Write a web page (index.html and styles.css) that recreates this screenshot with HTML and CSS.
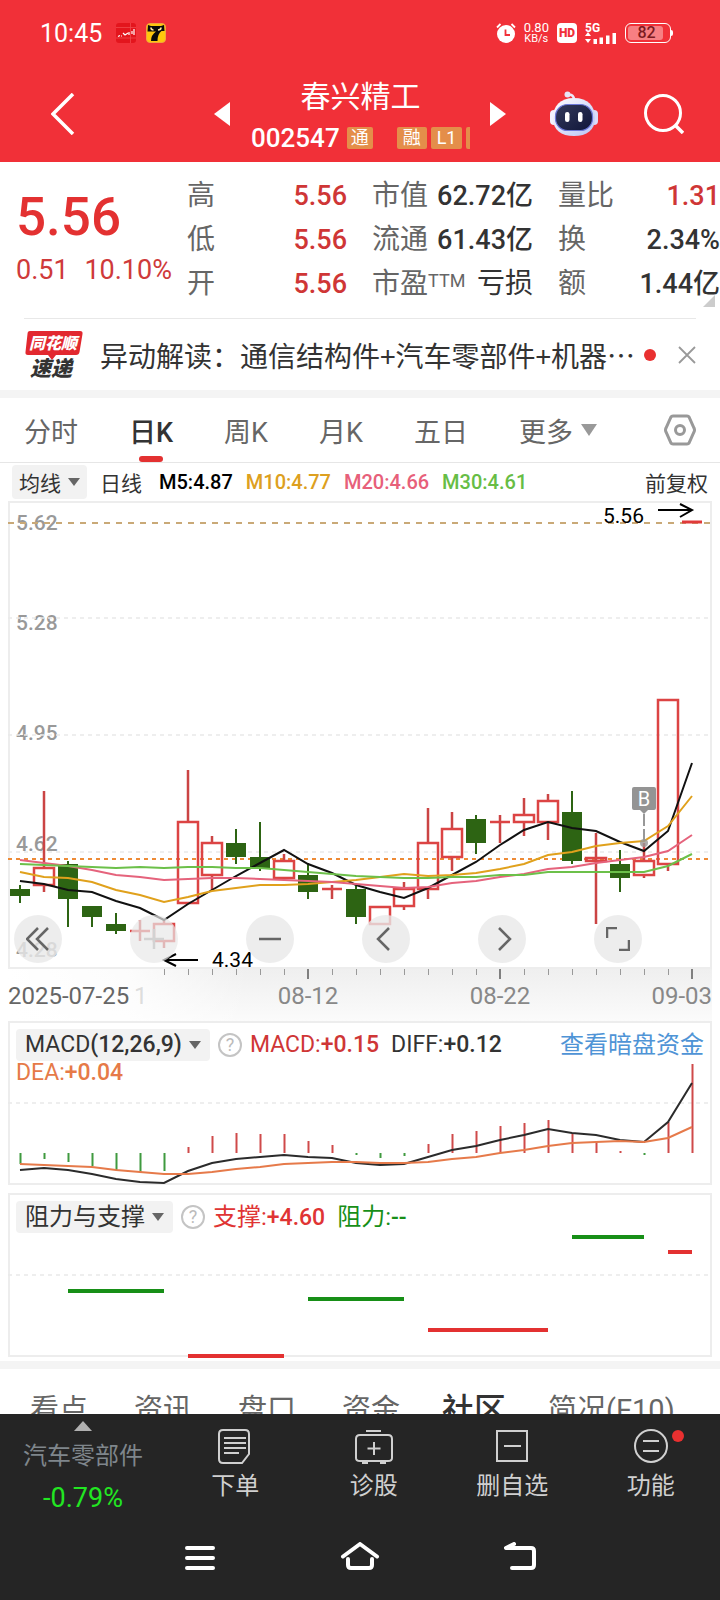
FILE: index.html
```html
<!DOCTYPE html>
<html lang="zh-CN">
<head>
<meta charset="utf-8">
<meta name="viewport" content="width=device-width, initial-scale=1">
<title>春兴精工 002547</title>
<link rel="stylesheet" href="styles.css">
</head>
<body>
<div class="app">
  <header class="header">
    <div class="status">
      <span class="clock">10:45</span>
      <svg class="status-app" viewBox="0 0 20 20" width="20" height="20" aria-hidden="true">
        <rect width="20" height="20" rx="3" fill="#e3151d"/>
        <path d="M0 4.500h20M0 15h20M14.500 0v20" stroke="#f0474b" stroke-width=".8"/>
        <path d="M2 13.500l2-1M5 13h1M7 10l2 2M9 12l3-2M13 9v3M16 8v3M18 6v6" stroke="#fff" stroke-width="1.200" fill="none"/>
      </svg>
      <svg class="status-app" viewBox="0 0 20 20" width="20" height="20" aria-hidden="true">
        <rect x=".5" y=".5" width="19" height="19" rx="3.500" fill="#ffc70d" stroke="#f2a43c"/>
        <path d="M2 2l3 1h10l3-1 .5 6h-3q-4 3-4 10H5q0-6 5-9.500H1.500z" fill="#0b0b0b"/>
        <path d="M5 4.500q0 2.500 2.500 2.500M15 4.500q0 2.500-3 2.500" stroke="#ffe9a0" stroke-width="1.600" fill="none"/>
      </svg>
      <div class="status-right">
        <svg viewBox="0 0 20 20" width="20" height="20" aria-hidden="true">
          <circle cx="10" cy="11" r="9" fill="#fff"/>
          <path d="M1 4.500L4.500 1M19 4.500L15.500 1" stroke="#fff" stroke-width="1.800"/>
          <path d="M9.500 6.500V12H14" stroke="#f13038" stroke-width="1.800" fill="none"/>
        </svg>
        <span class="speed"><span>0.80</span><span>KB/s</span></span>
        <span class="hd">HD</span>
        <span class="signal">
          <span class="net">5G</span>
          <svg viewBox="0 0 32 12" width="32" height="12" aria-hidden="true">
            <path d="M0 4L3 0l3 4zM0 7h6l-3 4zM8.500 7h3.500v5H8.500zM14.500 5.500H18V12h-3.500zM21 3.500h3.500V12H21zM27.500 1H31v11h-3.500z" fill="#fff"/>
          </svg>
        </span>
        <span class="battery"><span class="battery-level">82</span></span>
      </div>
    </div>
    <div class="nav">
      <button class="icon-btn back" aria-label="返回">
        <svg viewBox="0 0 24 42" width="24" height="42"><path d="M22 1L2 21l20 20" fill="none" stroke="#fff" stroke-width="3.500"/></svg>
      </button>
      <button class="icon-btn" aria-label="上一只">
        <svg viewBox="0 0 16 24" width="16" height="24"><path d="M16 0v24L0 12z" fill="#fff"/></svg>
      </button>
      <div class="stock">
        <h1 class="stock-name">春兴精工</h1>
        <div class="stock-code">
          <span>002547</span>
          <span class="badge badge-first">通</span>
          <span class="badge">融</span>
          <span class="badge">L1</span>
          <span class="badge badge-cut"></span>
        </div>
      </div>
      <button class="icon-btn" aria-label="下一只">
        <svg viewBox="0 0 16 24" width="16" height="24"><path d="M0 0v24l16-12z" fill="#fff"/></svg>
      </button>
      <button class="icon-btn robot" aria-label="智能助手">
        <svg viewBox="0 0 50 46" width="50" height="46">
          <defs>
            <linearGradient id="shell" x1="0" y1="0" x2="1" y2="1"><stop offset="0" stop-color="#fff"/><stop offset="1" stop-color="#b9c3f5"/></linearGradient>
            <linearGradient id="visor" x1="0" y1="0" x2="1" y2="1"><stop offset="0" stop-color="#33395a"/><stop offset="1" stop-color="#10163a"/></linearGradient>
          </defs>
          <path d="M25 9Q25 3 19 4" fill="none" stroke="#ece9fa" stroke-width="2.500"/>
          <circle cx="18.500" cy="3.500" r="3" fill="#e7e4f7"/>
          <rect x="1" y="19" width="8" height="15" rx="4" fill="#f3f2fd"/>
          <rect x="41" y="19" width="8" height="15" rx="4" fill="#dadcfa"/>
          <path d="M25 7C39 7 46 15 46 27S38 45 25 45 4 39 4 27 11 7 25 7z" fill="url(#shell)"/>
          <rect x="6.500" y="13.500" width="37" height="26" rx="12" fill="url(#visor)" stroke="#6c78d8" stroke-width="1.200"/>
          <rect x="16" y="21" width="4.500" height="10" rx="2.200" fill="#fff"/>
          <rect x="29" y="21" width="4.500" height="10" rx="2.200" fill="#fff"/>
        </svg>
      </button>
      <button class="icon-btn search" aria-label="搜索">
        <svg viewBox="0 0 40 40" width="40" height="40"><circle cx="19" cy="19" r="17.500" fill="none" stroke="#fff" stroke-width="3"/><path d="M31 31l8 8" stroke="#fff" stroke-width="3.500"/></svg>
      </button>
    </div>
  </header>

  <main class="main">
    <section class="quote">
      <div class="price">
        <div class="price-now">5.56</div>
        <div class="price-change"><span>0.51</span><span>10.10%</span></div>
      </div>
      <dl class="stats">
        <div><dt>高</dt><dd class="up">5.56</dd></div>
        <div><dt>低</dt><dd class="up">5.56</dd></div>
        <div><dt>开</dt><dd class="up">5.56</dd></div>
      </dl>
      <dl class="stats">
        <div><dt>市值</dt><dd>62.72亿</dd></div>
        <div><dt>流通</dt><dd>61.43亿</dd></div>
        <div><dt>市盈<small class="ttm">TTM</small></dt><dd class="plain">亏损</dd></div>
      </dl>
      <dl class="stats stats-last">
        <div><dt>量比</dt><dd class="up">1.31</dd></div>
        <div><dt>换</dt><dd>2.34%</dd></div>
        <div><dt>额</dt><dd>1.44亿</dd></div>
      </dl>
      <span class="corner"></span>
    </section>

    <section class="news">
      <svg class="news-logo" viewBox="0 0 60 50" width="60" height="50" role="img" aria-label="同花顺速递">
        <path d="M6 1h50q3 0 2.500 3l-3 18q-.5 3-3.500 3H32l-4 5-4-5H4q-3 0-2.500-3l2-18Q3.500 1 6 1z" fill="#e2282f"/>
        <text class="logo-top" x="5" y="19">同花顺</text>
        <text class="logo-bottom" x="6" y="46">速递</text>
      </svg>
      <a class="news-text" href="#news">异动解读：通信结构件+汽车零部件+机器…</a>
      <span class="dot"></span>
      <button class="icon-btn" aria-label="关闭">
        <svg viewBox="0 0 18 18" width="18" height="18"><path d="M1 1l16 16M17 1L1 17" stroke="#999" stroke-width="1.800"/></svg>
      </button>
    </section>

    <nav class="periods">
      <button class="period">分时</button>
      <button class="period active">日K</button>
      <button class="period">周K</button>
      <button class="period">月K</button>
      <button class="period">五日</button>
      <button class="period more">更多<svg viewBox="0 0 16 12" width="16" height="12" aria-hidden="true"><path d="M0 0h16L8 12z" fill="#999"/></svg></button>
      <button class="icon-btn settings" aria-label="设置">
        <svg viewBox="0 0 32 32" width="32" height="32"><path d="M9 2h14q1.500 0 2 1l5 11q1 2 0 4l-5 11q-.5 1-2 1H9q-1.500 0-2-1L2 18q-1-2 0-4L7 3q.5-1 2-1z" fill="none" stroke="#999" stroke-width="3"/><circle cx="16" cy="16" r="4.500" fill="none" stroke="#999" stroke-width="3"/></svg>
      </button>
    </nav>

    <div class="averages">
      <button class="pick pick-small">均线<span class="caret"></span></button>
      <span class="kind">日线</span>
      <span class="ma5">M5:4.87</span>
      <span class="ma10">M10:4.77</span>
      <span class="ma20">M20:4.66</span>
      <span class="ma30">M30:4.61</span>
      <span class="adjust">前复权</span>
    </div>

    <section class="panel">
      <svg class="plot" viewBox="0 501 720 520" role="img" aria-label="日K线图">
        <defs>
          <linearGradient id="shade" x1="0" y1="0" x2="0" y2="1"><stop offset="0" stop-color="#efefef"/><stop offset="1" stop-color="#fbfbfb"/></linearGradient>
          <linearGradient id="fade"><stop offset="0" stop-color="#fff"/><stop offset=".5" stop-color="#fff" stop-opacity=".8"/><stop offset="1" stop-color="#fff" stop-opacity="0"/></linearGradient>
        </defs>
        <rect x="8" y="969" width="704" height="52" fill="url(#shade)"/>
        <rect x="8" y="969" width="240" height="52" fill="url(#fade)"/>
        <rect class="frame" x="9" y="502" width="702" height="466"/>
        <g class="axis">
          <text x="16" y="530">5.62</text><text x="16" y="630">5.28</text><text x="16" y="740">4.95</text><text x="16" y="851">4.62</text><text x="16" y="957">4.28</text>
        </g>
        <path class="grid" d="M8 618H708M8 735H708M8 852H708"/>
        <path class="limit" d="M8 523H710"/>
        <path class="last" d="M8 859H708"/>
        <path class="green-body" d="M20 889v7M68 864v35M92 906v11M116 924v7M236 843v14M260 857v11M308 875v17M356 889v28M476 819v24M572 812v49M620 864v14"/>
        <path class="green-wick" d="M20 885v18M68 861v66M92 906v21M116 913v21M236 829v35M260 822v49M308 863v36M356 886v38M476 815v39M572 791v73M620 850v42"/>
        <path class="red-wick" d="M44 791v77M44 885v7M140 920v21M164 920v4M164 941v7M188 770v52M212 836v7M212 875v15M284 854v7M284 877v3M332 885v14M404 882v7M404 906v4M428 808v35M428 889v10M452 812v17M452 857v14M500 815v28M524 798v17M524 822v14M548 794v7M548 822v18M596 833v91M644 843v18M644 875v3M668 864v7"/>
        <path class="red-body" d="M34 868h20v17H34zM154 924h20v17h-20zM178 822h20v81h-20zM202 843h20v32h-20zM274 861h20v17h-20zM370 907h20v17h-20zM394 889h20v17h-20zM418 843h20v46h-20zM442 829h20v28h-20zM514 815h20v7h-20zM538 801h20v21h-20zM586 858h20v3h-20zM634 861h20v14h-20zM658 700h20v164h-20zM130 931h20M322 889h20M490 822h20"/>
        <path class="red-line" d="M682 522h20"/>
        <polyline class="line-ma5" points="20,881 44,884 68,890 92,892 116,901 140,908 164,920 188,904 212,890 236,876 260,863 284,850 308,864 332,873 356,885 380,892 404,898 428,888 452,875 476,862 500,845 524,830 548,822 572,828 596,831 620,842 644,851 668,831 692,763"/>
        <polyline class="line-ma10" points="20,872 44,877 68,878 92,882 116,890 140,895 164,902 188,897 212,891 236,888 260,885 284,885 308,884 332,882 356,880 380,877 404,874 428,876 452,875 476,873 500,869 524,864 548,855 572,852 596,846 620,843 644,841 668,826 692,796"/>
        <polyline class="line-ma20" points="20,860 44,863 68,866 92,870 116,875 140,877 164,880 188,879 212,878 236,878 260,879 284,880 308,881 332,882 356,884 380,886 404,888 428,887 452,883 476,881 500,877 524,874 548,869 572,867 596,863 620,860 644,857 668,851 692,835"/>
        <polyline class="line-ma30" points="20,864 44,865 68,866 92,867 116,868 140,867 164,868 188,867 212,867 236,868 260,868 284,870 308,872 332,874 356,876 380,877 404,878 428,878 452,877 476,877 500,875 524,875 548,872 572,872 596,872 620,872 644,872 668,866 692,854"/>
        <path d="M644 814v12M644 829v12" stroke="#777" stroke-width="1.500"/>
        <circle cx="644" cy="843" r="4" fill="#999" opacity=".8"/>
        <path d="M634 787h20q2 0 2 2v19q0 2-2 2h-6l-4 4-4-4h-6q-2 0-2-2v-19q0-2 2-2z" fill="#949494"/>
        <text class="buy" x="644" y="806">B</text>
        <text class="mark" x="603" y="523">5.56</text>
        <path class="arrow" d="M658 510h34M680 504l12 6-12 7"/>
        <text class="mark" x="212" y="967">4.34</text>
        <path class="arrow" d="M198 960h-34M176 954l-12 6 12 6"/>
        <path d="M164.500 969v6M188.500 969v6M212.500 969v6M236.500 969v6M260.500 969v6M284.500 969v6M332.500 969v6M356.500 969v6M380.500 969v6M404.500 969v6M428.500 969v6M452.500 969v6M476.500 969v6M524.500 969v6M548.500 969v6M572.500 969v6M596.500 969v6M620.500 969v6M644.500 969v6M668.500 969v6" stroke="#999"/>
        <path d="M308 969v10M500 969v10M692 969v10" stroke="#808080" stroke-width="2"/>
        <g class="date">
          <text class="date-first" x="8" y="1004">2025-07-25</text>
          <text class="date-faint" x="134" y="1004">1</text>
          <text x="308" y="1004" text-anchor="middle">08-12</text>
          <text x="500" y="1004" text-anchor="middle">08-22</text>
          <text x="712" y="1004" text-anchor="end">09-03</text>
        </g>
      </svg>
      <div class="controls">
        <button class="control" aria-label="最左"><svg viewBox="0 0 24 24" width="24" height="24"><path d="M12 1L1 12l11 11M22 1L11 12l11 11"/></svg></button>
        <button class="control control-cross" aria-label="放大"><svg viewBox="0 0 24 24" width="24" height="24"><path d="M2 12h20M12 2v20"/></svg></button>
        <button class="control" aria-label="缩小"><svg viewBox="0 0 24 24" width="24" height="24"><path d="M1 12h22"/></svg></button>
        <button class="control" aria-label="向左"><svg viewBox="0 0 24 24" width="24" height="24"><path d="M15 1L4 12l11 11"/></svg></button>
        <button class="control" aria-label="向右"><svg viewBox="0 0 24 24" width="24" height="24"><path d="M9 1l11 11L9 23"/></svg></button>
        <button class="control" aria-label="全屏"><svg viewBox="0 0 24 24" width="24" height="24"><path d="M1 11V1h10M23 13v10H13"/></svg></button>
      </div>
    </section>

    <section class="panel">
      <svg class="plot" viewBox="0 1021 720 164" role="img" aria-label="MACD">
        <rect class="frame" x="9" y="1022" width="702" height="162"/>
        <path class="grid" d="M8 1103H708"/>
        <path class="bar-down" d="M20.500 1153v11M44.500 1153v6M68.500 1153v9M92.500 1153v13M116.500 1153v17M140.500 1153v19M164.500 1153v18M356.500 1153v2M380.500 1153v5M404.500 1153v3M644.500 1153v2"/>
        <path class="bar-up" d="M188.500 1153v-6M212.500 1153v-17M236.500 1153v-20M260.500 1153v-19M284.500 1153v-19M308.500 1153v-12M332.500 1153v-8M428.500 1153v-9M452.500 1153v-19M476.500 1153v-22M500.500 1153v-27M524.500 1153v-30M548.500 1153v-33M572.500 1153v-19M596.500 1153v-12M620.500 1153v-2M668.500 1153v-31M692.500 1153v-89"/>
        <polyline class="line-diff" points="20,1170 44,1168 68,1170 92,1174 116,1179 140,1182 164,1183 188,1171 212,1163 236,1159 260,1157 284,1155 308,1157 332,1158 356,1163 380,1165 404,1164 428,1157 452,1150 476,1146 500,1140 524,1135 548,1129 572,1133 596,1135 620,1140 644,1142 668,1122 692,1083"/>
        <polyline class="line-dea" points="20,1164 44,1165 68,1166 92,1167 116,1170 140,1172 164,1174 188,1174 212,1172 236,1169 260,1167 284,1164 308,1163 332,1162 356,1162 380,1163 404,1163 428,1162 452,1159 476,1157 500,1153 524,1150 548,1146 572,1143 596,1142 620,1141 644,1142 668,1138 692,1127"/>
      </svg>
      <div class="legend">
        <div class="legend-row">
          <button class="pick pick-macd">MACD<b>(12,26,9)</b><span class="caret"></span></button>
          <button class="help" aria-label="说明">?</button>
          <span class="macd up">MACD:<b>+0.15</b></span>
          <span class="macd diff">DIFF:<b>+0.12</b></span>
          <a class="fund" href="#fund">查看暗盘资金</a>
        </div>
        <div class="macd dea">DEA:<b>+0.04</b></div>
      </div>
    </section>

    <section class="panel panel-gap">
      <svg class="plot" viewBox="0 1193 720 168" role="img" aria-label="阻力与支撑">
        <rect class="frame" x="9" y="1194" width="702" height="162"/>
        <path class="grid" d="M8 1275H708"/>
        <path d="M68 1291h96M308 1299h96M572 1237h72" stroke="#178f17" stroke-width="4"/>
        <path d="M188 1356h96M428 1330h120M668 1252h24" stroke="#e33131" stroke-width="4"/>
      </svg>
      <div class="legend">
        <div class="legend-row">
          <button class="pick">阻力与支撑<span class="caret"></span></button>
          <button class="help" aria-label="说明">?</button>
          <span class="support">支撑:<b>+4.60</b></span>
          <span class="resist">阻力:<b>--</b></span>
        </div>
      </div>
    </section>

    <nav class="topics">
      <a href="#view">看点</a>
      <a href="#info">资讯</a>
      <a href="#book">盘口</a>
      <a href="#flow">资金</a>
      <a class="topic-active" href="#club">社区</a>
      <a href="#f10">简况(F10)</a>
    </nav>
  </main>

  <footer class="footer">
    <div class="actions">
      <button class="action sector">
        <span class="sector-caret"></span>
        <span class="sector-name">汽车零部件</span>
        <span class="sector-change">-0.79%</span>
      </button>
      <button class="action">
        <svg viewBox="0 0 36 40" width="36" height="40"><path d="M6 2h22q4 0 4 4v20l-7 9H6q-4 0-4-4V6q0-4 4-4z"/><path d="M7 10h22M7 15h22M7 20h22M7 25h15"/></svg>
        <span>下单</span>
      </button>
      <button class="action">
        <svg viewBox="0 0 40 40" width="40" height="40"><path d="M12 3h15M6 7h28q4 0 4 4v19q0 3-4 3H6q-4 0-4-3V11q0-4 4-4zM8 35h6M26 35h6M20 14v13M13.500 20.500h13"/></svg>
        <span>诊股</span>
      </button>
      <button class="action">
        <svg viewBox="0 0 36 40" width="36" height="40"><path d="M3 3h30v30H3zM10 18h17"/></svg>
        <span>删自选</span>
      </button>
      <button class="action">
        <svg viewBox="0 0 36 40" width="36" height="40"><circle cx="18" cy="18" r="16"/><path d="M10 13h16M10 23h16"/></svg>
        <span>功能</span>
        <span class="dot action-dot"></span>
      </button>
    </div>
    <div class="system">
      <button class="icon-btn" aria-label="最近任务"><svg viewBox="0 0 32 32" width="32" height="32"><path d="M3 6h26M3 16h26M3 26h26"/></svg></button>
      <button class="icon-btn" aria-label="主屏幕"><svg viewBox="0 0 40 32" width="40" height="32"><path d="M3 14.500L20 2l17 12.500M8 17v6q0 3 3 3h18q3 0 3-3v-6"/></svg></button>
      <button class="icon-btn" aria-label="返回上级"><svg viewBox="0 0 32 32" width="32" height="32"><path d="M10 2L2 6h25q3 0 3 3v14q0 3-3 3H8"/></svg></button>
    </div>
  </footer>
</div>
</body>
</html>
```

FILE: styles.css
```css
* {
  box-sizing: border-box;
}

body {
  margin: 0;
  background: #fff;
  color: #333;
  font-family: Roboto, "Noto Sans CJK SC", sans-serif;
  font-size: 24px;
}

button {
  margin: 0;
  padding: 0;
  border: 0;
  background: none;
  color: inherit;
  font: inherit;
  white-space: nowrap;
}

a {
  color: inherit;
  text-decoration: none;
}

b {
  font-weight: 500;
}

.app {
  display: flex;
  flex-direction: column;
  height: 100vh;
  overflow: hidden;
}

.icon-btn {
  display: flex;
  flex: none;
}

/* header */
.header {
  flex: none;
  height: 162px;
  background: #f13038;
  color: #fff;
}

.status {
  display: flex;
  align-items: center;
  height: 66px;
  padding: 0 49px 0 40px;
}

.clock {
  margin-right: 14px;
  font-size: 25px;
}

.status-app {
  margin-right: 10px;
}

.status-right {
  display: flex;
  align-items: center;
  gap: 8px;
  margin-left: auto;
}

.speed {
  display: flex;
  flex-direction: column;
  align-items: center;
  font-size: 11px;
  line-height: 11px;
}

.speed span:first-child {
  font-size: 13px;
}

.hd {
  width: 20px;
  border-radius: 4px;
  background: #fff;
  color: #f13038;
  font-size: 12px;
  font-weight: 900;
  line-height: 20px;
  text-align: center;
}

.signal {
  display: flex;
  flex-direction: column;
  font-size: 12px;
  font-weight: 700;
  line-height: 10px;
}

.net {
  height: 9px;
}

.battery {
  position: relative;
  width: 46px;
  height: 20px;
  padding: 2px;
  border: 1px solid #fff;
  border-radius: 6px;
}

.battery::after {
  content: "";
  position: absolute;
  top: 6px;
  right: -3px;
  width: 2px;
  height: 6px;
  border-radius: 0 2px 2px 0;
  background: #fff;
}

.battery-level {
  display: block;
  width: 35px;
  padding-left: 2px;
  border-radius: 3px;
  background: #f77f83;
  color: #7c1a20;
  font-size: 16px;
  font-weight: 500;
  line-height: 14px;
  text-align: center;
}

.nav {
  display: flex;
  align-items: center;
  height: 96px;
  padding: 0 36px 0 51px;
}

.back {
  margin-right: auto;
}

.stock {
  width: 219px;
  margin: 0 20px 0 21px;
  padding-top: 8px;
  overflow: hidden;
}

.stock-name {
  margin: 0;
  font-size: 30px;
  font-weight: 400;
  line-height: 40px;
  text-align: center;
  white-space: nowrap;
}

.stock-code {
  display: flex;
  align-items: center;
  gap: 4px;
  height: 42px;
  font-size: 26px;
  font-weight: 500;
  line-height: 42px;
}

.badge {
  flex: none;
  min-width: 26px;
  padding: 0 6px;
  border-radius: 2px;
  background: #e48e4a;
  font-size: 18px;
  font-weight: 400;
  line-height: 22px;
  text-align: center;
}

.badge-first {
  margin: 0 20px 0 3px;
  padding: 0 4px;
}

.badge-cut {
  height: 22px;
}

.robot {
  margin-left: 43px;
}

.search {
  margin-left: 45px;
}

/* main column */
.main {
  flex: 1;
  min-height: 0;
  overflow: hidden;
}

.quote {
  position: relative;
  display: grid;
  grid-template-columns: 171fr 185fr 186fr 162fr;
  height: 156px;
  padding: 12px 0 0 16px;
}

.price {
  padding-right: 15px;
  color: #e33131;
}

.price-now {
  font-size: 53px;
  font-weight: 500;
  line-height: 86px;
}

.price-change {
  display: flex;
  justify-content: space-between;
  color: #cf3a3a;
  font-size: 27px;
  line-height: 20px;
}

.stats {
  margin: 0;
  padding-right: 25px;
  font-size: 28px;
  line-height: 44px;
  white-space: nowrap;
}

.stats-last {
  padding-right: 0;
}

.stats div {
  display: flex;
  justify-content: space-between;
  height: 44px;
}

.stats dt {
  color: #666;
}

.stats dd {
  margin: 0;
  font-size: 27px;
  font-weight: 500;
}

.stats .plain {
  font-size: 28px;
  font-weight: 400;
}

.ttm {
  position: relative;
  top: -6px;
  font-size: 18px;
}

.up,
.stats .up {
  color: #cf3636;
}

.corner {
  position: absolute;
  right: 5px;
  bottom: 11px;
  border: 6px solid;
  border-color: transparent #ccc #ccc transparent;
}

.news {
  display: flex;
  align-items: center;
  height: 72px;
  margin: 0 24px;
  border-top: 1px solid #e8e8e8;
}

.news-logo {
  flex: none;
  margin-right: 16px;
  overflow: visible;
}

.logo-top,
.logo-bottom {
  font-family: "Noto Sans CJK SC", sans-serif;
  font-style: italic;
  font-weight: 900;
}

.logo-top {
  fill: #fff;
  font-size: 16px;
}

.logo-bottom {
  fill: #333;
  font-size: 21px;
}

.news-text {
  flex: 1;
  min-width: 0;
  overflow: hidden;
  font-family: "Noto Sans CJK SC", sans-serif;
  font-size: 28px;
  line-height: 40px;
  white-space: nowrap;
}

.dot {
  flex: none;
  width: 12px;
  height: 12px;
  border-radius: 50%;
  background: #e93030;
}

.news .dot {
  margin-right: 22px;
}

.periods {
  display: flex;
  align-items: center;
  gap: 51px;
  height: 73px;
  padding: 0 24px;
  border-top: 8px solid #f4f4f4;
  border-bottom: 1px solid #e6e6e6;
  color: #666;
  font-size: 27px;
}

.period {
  position: relative;
  height: 64px;
}

.period.active {
  color: #333;
  font-weight: 500;
}

.period.active::after {
  content: "";
  position: absolute;
  bottom: 0;
  left: calc(50% - 12px);
  width: 24px;
  height: 6px;
  border-radius: 3px;
  background: #e33131;
}

.more {
  display: flex;
  align-items: center;
  gap: 8px;
}

.settings {
  margin-left: auto;
}

.averages {
  display: flex;
  align-items: center;
  gap: 13px;
  height: 38px;
  padding: 0 12px;
  font-size: 20px;
  font-weight: 500;
  white-space: nowrap;
}

.averages .kind,
.averages .adjust {
  font-size: 21px;
  font-weight: 400;
}

.averages .kind {
  margin-right: 4px;
}

.averages .adjust {
  margin-left: auto;
}

.ma5 {
  color: #000;
}

.ma10 {
  color: #dda020;
}

.ma20 {
  color: #e7607a;
}

.ma30 {
  color: #67bd45;
}

.pick {
  display: flex;
  align-items: center;
  gap: 7px;
  height: 32px;
  padding: 0 9px;
  border-radius: 4px;
  background: #f2f2f2;
  color: #333;
}

.pick-small {
  height: 34px;
  padding: 0 7px;
  font-size: 21px;
  font-weight: 400;
}

.pick b {
  margin-left: -7px;
}

.caret {
  border: 6px solid transparent;
  border-top: 8px solid #666;
  border-bottom: 0;
}

/* chart panels: plot and overlay share one grid cell */
.panel {
  display: grid;
}

.panel > * {
  grid-area: 1 / 1;
}

.panel-gap {
  margin-top: 8px;
}

.plot {
  display: block;
  width: 100%;
  height: auto;
}

.frame {
  fill: none;
  stroke: #ededed;
  stroke-width: 2;
}

.axis {
  fill: #999;
  font-size: 21px;
  font-weight: 500;
}

.grid {
  stroke: #e9e9e9;
  stroke-width: 1.5;
  stroke-dasharray: 4 4;
}

.limit {
  stroke: #c9a977;
  stroke-width: 2;
  stroke-dasharray: 6 6;
}

.last {
  stroke: #ee8a35;
  stroke-width: 2;
  stroke-dasharray: 4 4;
}

.green-body {
  stroke: #2d6413;
  stroke-width: 20;
}

.green-wick {
  stroke: #2d6413;
  stroke-width: 2;
}

.red-body {
  fill: none;
  stroke: #dc4444;
  stroke-width: 2.5;
}

.red-wick {
  stroke: #cb4444;
  stroke-width: 2.5;
}

.red-line {
  stroke: #e03a3a;
  stroke-width: 3;
}

.line-ma5,
.line-ma10,
.line-ma20,
.line-ma30,
.line-diff,
.line-dea {
  fill: none;
  stroke-width: 2;
}

.line-ma5 {
  stroke: #111;
}

.line-ma10 {
  stroke: #e0a11c;
}

.line-ma20 {
  stroke: #e5637c;
}

.line-ma30 {
  stroke: #6cc04a;
}

.line-diff {
  stroke: #2b2b2b;
}

.line-dea {
  stroke: #e67a4a;
}

.bar-up,
.bar-down {
  stroke: #cf4a4a;
  stroke-width: 2;
}

.bar-down {
  stroke: #3f9a3f;
}

.buy {
  fill: #fff;
  font-size: 20px;
  text-anchor: middle;
}

.mark {
  fill: #000;
  font-size: 21px;
}

.arrow {
  fill: none;
  stroke: #000;
  stroke-width: 2;
}

.date {
  fill: #888;
  font-size: 24px;
}

.date-first {
  fill: #666;
}

.date-faint {
  fill: #ddd;
}

.controls {
  display: flex;
  align-self: end;
  justify-content: space-between;
  padding: 0 78px 58px 14px;
}

.control {
  display: flex;
  align-items: center;
  justify-content: center;
  width: 48px;
  height: 48px;
  border-radius: 50%;
  background: rgba(232, 232, 232, 0.8);
}

.control path {
  fill: none;
  stroke: #666;
  stroke-width: 2.5;
}

.control-cross {
  background: rgba(232, 232, 232, 0.7);
}

.control-cross path {
  stroke: #d2d2d2;
}

.legend {
  padding: 8px 16px;
  line-height: 28px;
  white-space: nowrap;
}

.legend-row {
  display: flex;
  align-items: center;
  gap: 8px;
  height: 32px;
}

.pick-macd,
.macd,
.legend b {
  font-size: 23px;
}

.legend b {
  line-height: 24px;
}

.diff {
  margin-left: 4px;
}

.fund {
  margin-left: auto;
  color: #4f94d6;
}

.dea {
  color: #e67a48;
  line-height: 24px;
}

.help {
  width: 24px;
  height: 24px;
  border: 2px solid #c4c4c4;
  border-radius: 50%;
  color: #bbb;
  font-size: 18px;
  line-height: 20px;
}

.support {
  color: #e03434;
}

.resist {
  margin-left: 4px;
  color: #178f17;
}

.topics {
  display: flex;
  gap: 46px;
  padding: 0 30px;
  border-top: 8px solid #f4f4f4;
  color: #666;
  font-size: 29px;
  line-height: 82px;
  white-space: nowrap;
}

.topic-active {
  margin: 0 -4px;
  color: #333;
  font-size: 32px;
  font-weight: 500;
}

/* bottom bars */
.footer {
  flex: none;
  background: #252525;
  color: #d0d0d0;
}

.actions {
  display: grid;
  grid-template-columns: 166px repeat(4, 1fr);
  height: 102px;
}

.action {
  position: relative;
  display: flex;
  flex-direction: column;
  align-items: center;
  padding-top: 14px;
  line-height: 36px;
}

.action svg {
  flex: none;
  fill: none;
  stroke: #d0d0d0;
  stroke-width: 2;
}

.action-dot {
  position: absolute;
  top: 16px;
  right: 36px;
}

.sector {
  padding-top: 7px;
}

.sector-caret {
  border: 9px solid transparent;
  border-top: 0;
  border-bottom: 10px solid #b0b0b0;
}

.sector-name {
  margin-top: 7px;
  color: #7f868c;
}

.sector-change {
  margin-top: 6px;
  color: #22e622;
  font-size: 27px;
}

.system {
  display: flex;
  justify-content: center;
  gap: 124px;
  height: 84px;
  padding-top: 26px;
}

.system path {
  fill: none;
  stroke: #fff;
  stroke-width: 4;
  stroke-linecap: round;
  stroke-linejoin: round;
}
```
